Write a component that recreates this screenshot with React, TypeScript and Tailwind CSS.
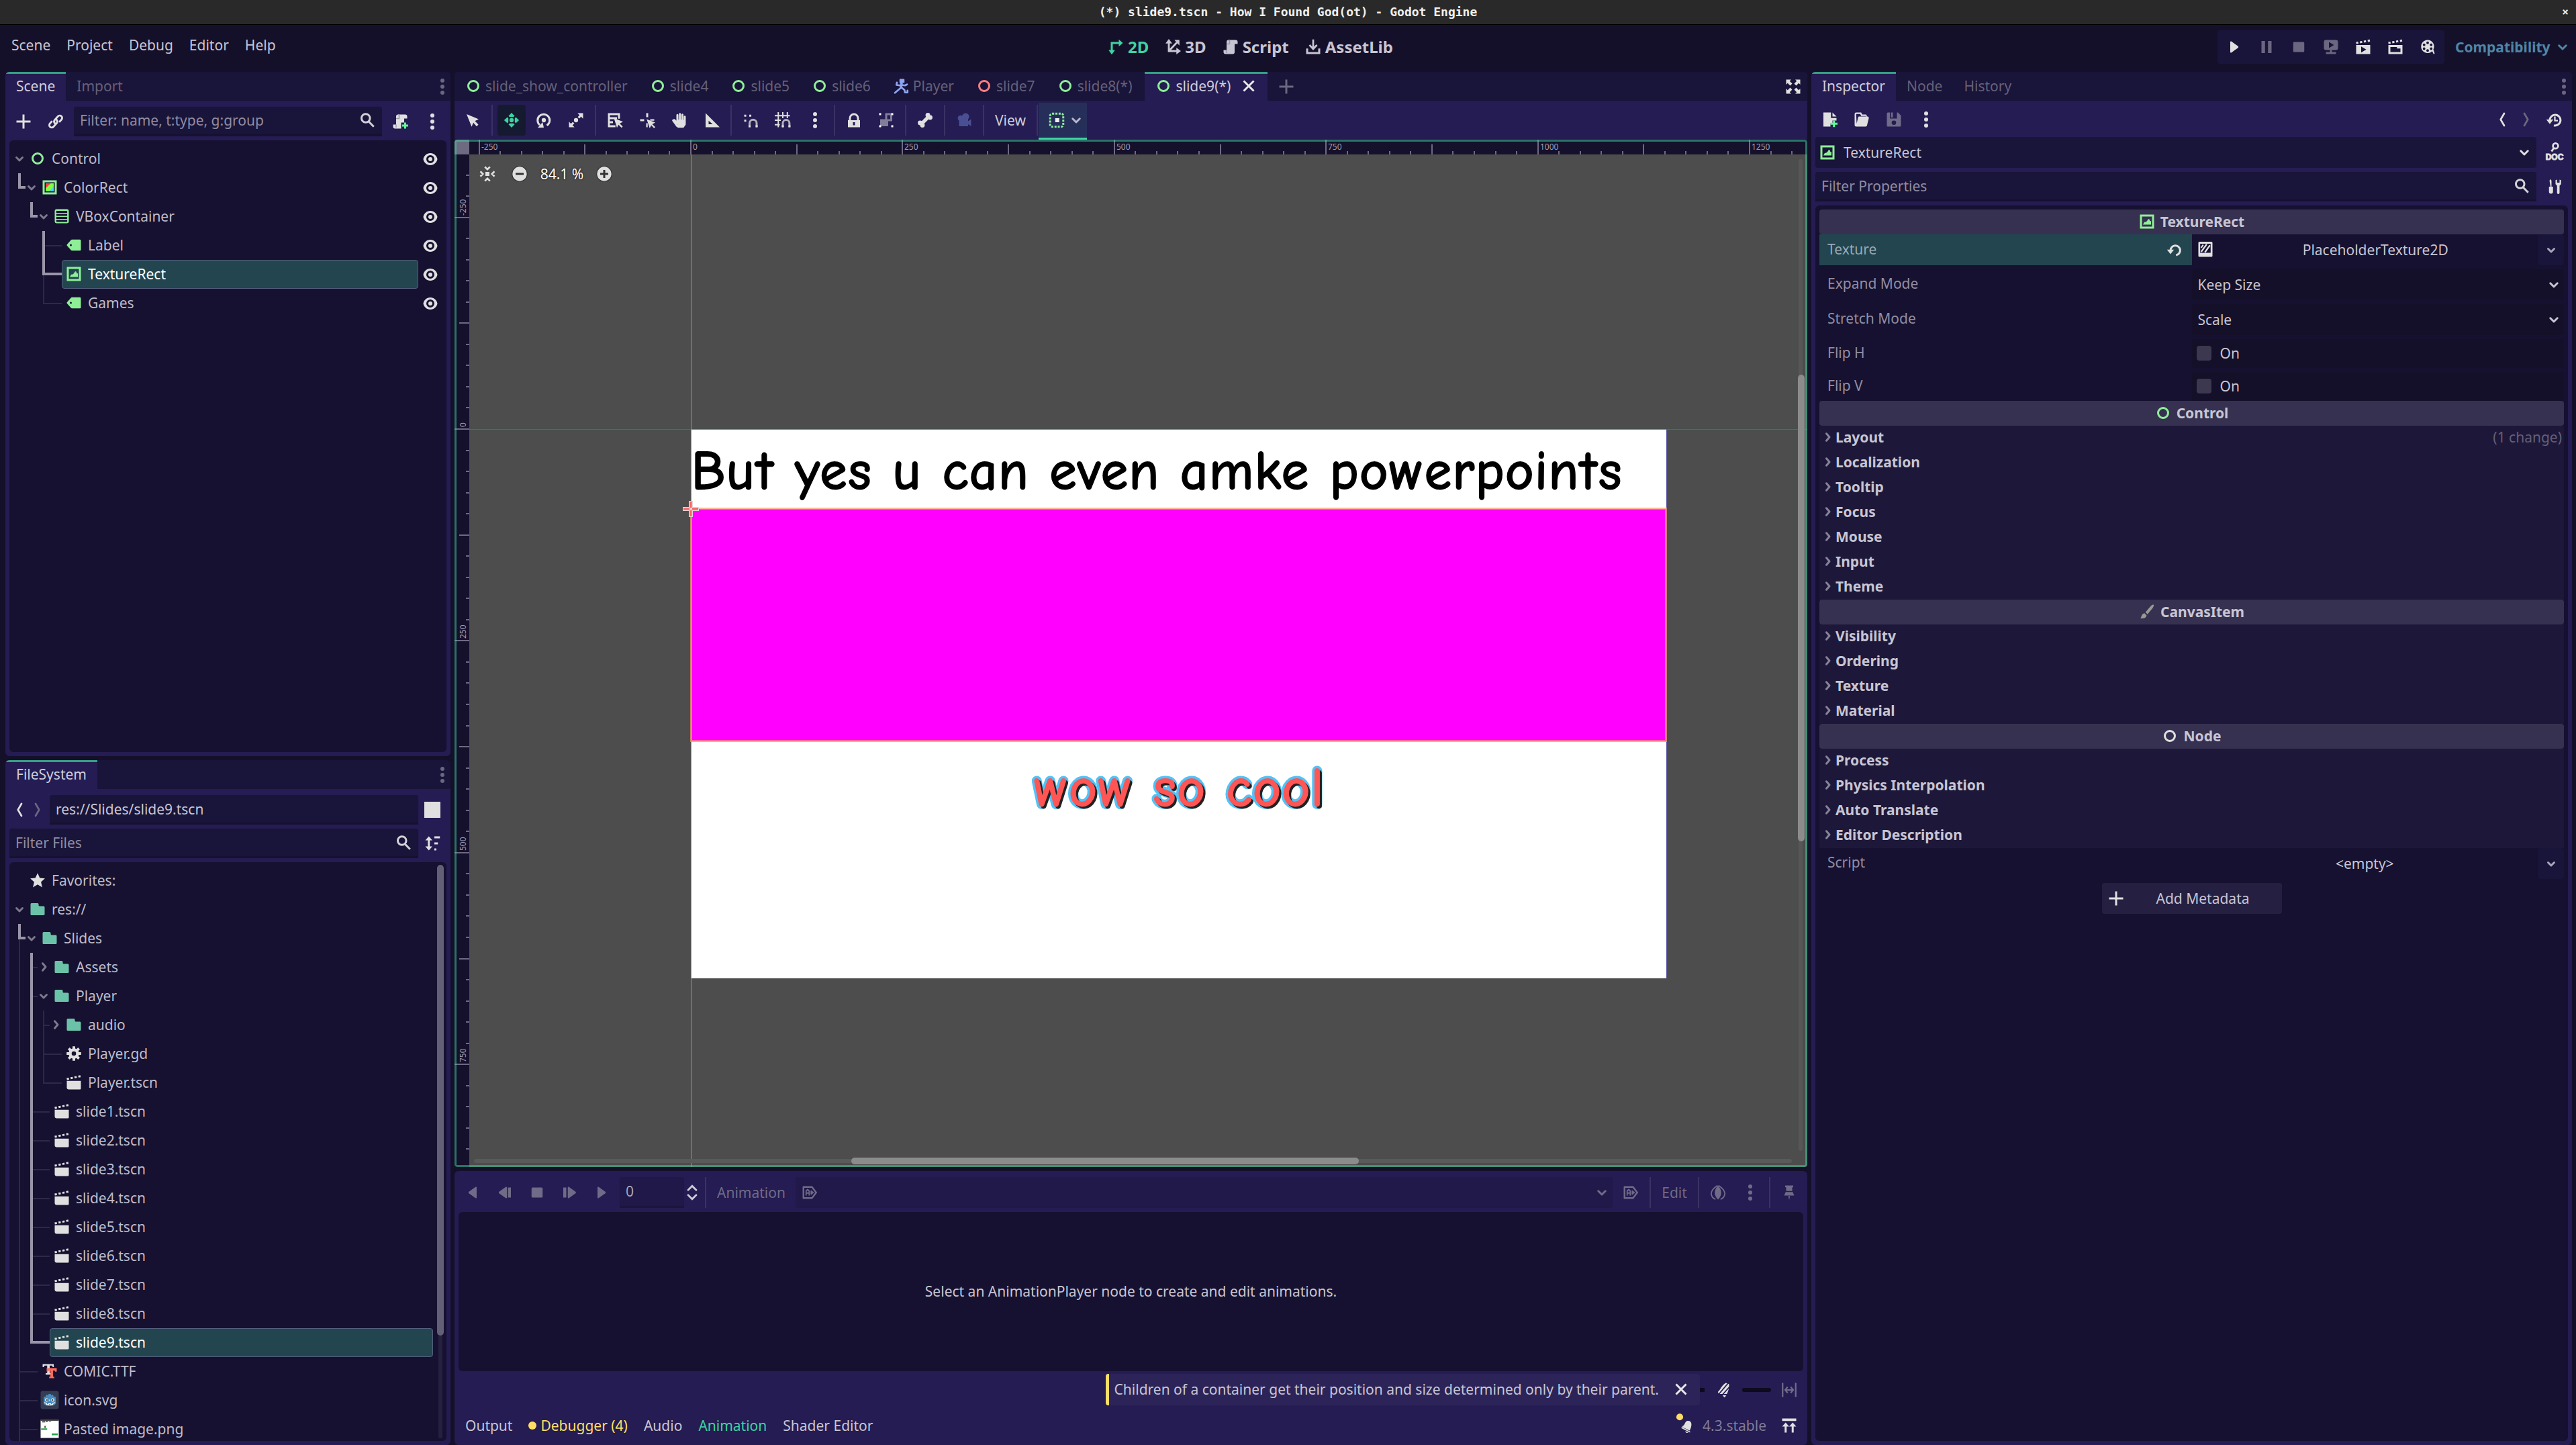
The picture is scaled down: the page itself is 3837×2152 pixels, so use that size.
import React from "react";

const G = "#8eef97";
const W = "#e0e0e0";

/* ------------------------------------------------------------------ icons */

const icons: Record<string, React.ReactNode> = {
  add: <path fill="currentColor" d="M7 1v6H1v2h6v6h2V9h6V7H9V1z" />,
  link: (
    <g fill="none" stroke="currentColor" strokeWidth="1.9" strokeLinecap="round">
      <path d="M7.2 9.8a2.6 2.6 0 0 1-.2-3.4l3.2-3.6a2.4 2.4 0 0 1 3.5 3.3L12 8" />
      <path d="M8.8 6.2a2.6 2.6 0 0 1 .2 3.4l-3.2 3.6a2.4 2.4 0 0 1-3.5-3.3L4 8" />
    </g>
  ),
  search: (
    <g fill="none" stroke="currentColor" strokeWidth="2">
      <circle cx="6.5" cy="6" r="4.2" />
      <path d="M9.5 9.3l5 5.2" />
    </g>
  ),
  script: (
    <g>
      <path fill="currentColor" d="M6 1a2 2 0 0 0-2 2v8H1v2a2 2 0 0 0 2 2h7a2 2 0 0 0 2-2V5h3V3a2 2 0 0 0-2-2z" />
      <path fill="none" stroke="#9a98a8" strokeWidth="1" d="M6 1a1.6 1.6 0 0 1 1 2v2H4M4 11v3" />
    </g>
  ),
  scriptAdd: (
    <g>
      <path fill="currentColor" d="M6 1a2 2 0 0 0-2 2v8H1v2a2 2 0 0 0 2 2h6V9h3V5h3V3a2 2 0 0 0-2-2z" />
      <path fill="none" stroke="#9a98a8" strokeWidth="1" d="M6 1a1.6 1.6 0 0 1 1 2v2H4M4 11v3" />
      <path fill="#5fff97" d="M12 9h2v2h2v2h-2v2h-2v-2h-2v-2h2z" />
    </g>
  ),
  dots: (
    <g fill="currentColor">
      <circle cx="8" cy="2" r="2" />
      <circle cx="8" cy="8" r="2" />
      <circle cx="8" cy="14" r="2" />
    </g>
  ),
  control: <circle cx="8" cy="8" r="5" fill="none" stroke={G} strokeWidth="2" />,
  controlRed: <circle cx="8" cy="8" r="5" fill="none" stroke="#fc7f7f" strokeWidth="2" />,
  node: <circle cx="8" cy="8" r="5" fill="none" stroke={W} strokeWidth="2" />,
  colorRect: (
    <g>
      <path fill={G} fillRule="evenodd" d="M1 1h14v14H1zM3 3v10h10V3z" />
      <path fill="#ff4545" d="M4 4h5l-5 6z" />
      <path fill="#80ff45" d="M9 4h3v4l-4 4H4v-3z" />
      <path fill="#45d7ff" d="M12 7v5H8z" />
    </g>
  ),
  vbox: <path fill={G} fillRule="evenodd" d="M3 1a2 2 0 0 0-2 2v10a2 2 0 0 0 2 2h10a2 2 0 0 0 2-2V3a2 2 0 0 0-2-2zM2.6 2.6h10.8v2H2.6zM2.6 5.600h10.8v2H2.6zM2.6 8.600h10.8v2H2.6zM2.6 11.600h10.8v2H2.6z" />,
  label: <path fill={G} fillRule="evenodd" d="M6 2.5a1 1 0 0 0-.7.3l-4 4.5a1 1 0 0 0 0 1.4l4 4.5a1 1 0 0 0 .7.3h8a1 1 0 0 0 1-1v-9a1 1 0 0 0-1-1zM5 7a1 1 0 0 1 0 2 1 1 0 0 1 0-2z" />,
  textureRect: (
    <g fill={G}>
      <path fillRule="evenodd" d="M1 1h14v14H1zM3 3v10h10V3z" />
      <path d="M9.2 5.5 8 7.5 6.6 8.5H5.4L4 11h8V7.5h-1l-.8-2z" />
    </g>
  ),
  eye: <path fill="currentColor" fillRule="evenodd" d="M8 2C4.4 2 1.5 4.8 1 8c.5 3.2 3.4 6 7 6s6.5-2.8 7-6c-.5-3.2-3.400-6-7-6zm0 2a4 4 0 0 1 0 8 4 4 0 0 1 0-8zm0 2a2 2 0 0 0 0 4 2 2 0 0 0 0-4z" />,
  open: <path fill="none" stroke="currentColor" strokeWidth="2" strokeLinecap="round" strokeLinejoin="round" d="M5 7l3 3 3-3" />,
  closed: <path fill="none" stroke="currentColor" strokeWidth="2" strokeLinecap="round" strokeLinejoin="round" d="M7 4.5l3 3.5-3 3.5" />,
  chevron: <path fill="none" stroke="currentColor" strokeWidth="2" strokeLinecap="round" strokeLinejoin="round" d="M4.5 6.5 8 10l3.5-3.5" />,
  back: <path fill="none" stroke="currentColor" strokeWidth="1.8" strokeLinecap="round" strokeLinejoin="round" d="M10 2 6.5 8l3.5 6" />,
  forward: <path fill="none" stroke="currentColor" strokeWidth="1.8" strokeLinecap="round" strokeLinejoin="round" d="M6 2l3.5 6L6 14" />,
  sort: (
    <g fill="currentColor">
      <path d="M4.5 1 8 5H5.5v6H8l-3.5 4L1 11h2.500V5H1z" />
      <path d="M10 1h5.500v2H10zM10 7h3.500v2H10zM10 13h2v2h-2z" />
    </g>
  ),
  star: <path fill="currentColor" d="m8 .8 2.200 4.900 5.100.5-3.900 3.500 1.200 5.300L8 12.200 3.400 15l1.200-5.300L.7 6.200l5.100-.5z" />,
  folder: <path fill="#6cc2a8" d="M2 2a1 1 0 0 0-1 1v10a1 1 0 0 0 1 1h12a1 1 0 0 0 1-1V6a1 1 0 0 0-1-1h-4a1 1 0 0 1-1-1V3a1 1 0 0 0-1-1z" />,
  clapper: (
    <g>
      <path fill="currentColor" d="M1 6.500h14V14a1 1 0 0 1-1 1H3a2 2 0 0 1-2-2z" />
      <path fill="none" stroke="currentColor" strokeWidth="2" strokeDasharray="2.2 1.7" d="M1 4.700 15 1.700" />
    </g>
  ),
  gear: (
    <g fill="none" stroke="currentColor">
      <circle cx="8" cy="8" r="3.7" strokeWidth="3" />
      <path strokeWidth="2.6" d="M8 .8v3M8 12.200v3M.8 8h3M12.200 8h3M2.900 2.900 5 5M11 11l2.100 2.100M13.100 2.900 11 5M5 11l-2.100 2.100" />
    </g>
  ),
  font: (
    <g>
      <path fill={W} d="M1 1h11v3h-1l-.5-1.500H8V10h1.500v1.500H4V10h1.500V2.500H3L2 4H1z" />
      <path fill="#ff6b5e" d="M5 5h10v3.500h-1.500l-.5-1H11.300V13.500h1.200V15H7.500v-1.500h1.200V7.500H7l-.5 1H5z" />
    </g>
  ),
  godot: (
    <g>
      <rect x="-1" y="-1" width="18" height="18" rx="2" fill="#363d52" />
      <path fill="#478cbf" d="M2 5 4 4.500 5 2.500l1.200 1L7 2h2l.8 1.500 1.200-1 1 2L14 5v6c0 1.500-2.700 3-6 3s-6-1.500-6-3z" />
      <circle cx="5" cy="8" r="1.6" fill="#fff" />
      <circle cx="11" cy="8" r="1.6" fill="#fff" />
      <circle cx="5.2" cy="8" r=".9" fill="#414042" />
      <circle cx="10.8" cy="8" r=".9" fill="#414042" />
      <path stroke="#fff" strokeWidth=".8" fill="none" d="M8 7.500v1.500M2.500 10.500l2.500 1v1h2v-.8h2v.8h2v-1l2.500-1" />
    </g>
  ),
  image: (
    <g>
      <rect x="-1" y="-1" width="18" height="18" fill="#fff" />
      <path fill="#111" d="M-1-1h18v.8H-1zM.5.5h3v1h-3zM4 .5h2v.8H4zM7 .5h2.500v.5H7z" />
      <path fill="#27a44a" d="M-.5 7.500H5.500V9H-.5zM10 12.500h6v1.800h-6z" />
      <path fill="#5a4a3a" d="M2.800 5h1.200v2.200H2.800z" />
    </g>
  ),
  player: (
    <g fill="none" stroke="#8da5f3" strokeLinecap="round" strokeLinejoin="round">
      <rect x="6.5" y="1" width="5" height="4" rx=".8" fill="#8da5f3" stroke="none" />
      <path strokeWidth="2.6" d="M8.500 5.500 8 9.500" />
      <path strokeWidth="1.8" d="M4 4.500 3.500 7 7 7.500M8.500 7l3.500.5L14 6.500M8 9.800l-2.500 2-3.500 3M8.500 9.500l3 2.500.5 2.500h2.500v-2" />
    </g>
  ),
  close: <path fill="none" stroke="currentColor" strokeWidth="2" d="m3 3 10 10M13 3 3 13" />,
  expand: <path fill="currentColor" d="M1 1h5L4.500 2.500 7 5 5 7 2.500 4.500 1 6zM15 1v5l-1.500-1.500L11 7 9 5l2.500-2.500L10 1zM1 15v-5l1.500 1.500L5 9l2 2-2.500 2.500L6 15zM15 15h-5l1.500-1.500L9 11l2-2 2.500 2.500L15 10z" />,
  select: <path fill="currentColor" d="M2 2l5 12.500 1.700-4 3.300 3.600 1.700-1.700-3.400-3.500L14 7z" />,
  move: (
    <g fill="currentColor">
      <circle cx="8" cy="8" r="2.1" />
      <path d="M8 .6 11 3.800 9.800 4.800H6.200L5 3.800zM8 15.400l3-3.200-1.200-1H6.200l-1.200 1zM.6 8l3.200-3 1 1.200v3.600l-1 1.200zM15.400 8l-3.200-3-1 1.200v3.600l1 1.200z" />
    </g>
  ),
  rotate: (
    <g>
      <circle cx="8" cy="8" r="2.1" fill="currentColor" />
      <path fill="none" stroke="currentColor" strokeWidth="2" d="M11 13.200A6 6 0 1 0 4 12.700" />
      <path fill="currentColor" d="M2 15.500 8 15.400 6.800 10z" />
    </g>
  ),
  scale: (
    <g fill="currentColor">
      <circle cx="8" cy="8" r="2.1" />
      <path d="M9.500 1H15v5.500l-2-2-1.800 1.800-1.500-1.500L11.500 3zM6.500 15H1V9.500l2 2 1.800-1.800 1.500 1.500L4.500 13z" />
    </g>
  ),
  listSelect: (
    <g>
      <path fill="none" stroke="currentColor" strokeWidth="1.9" d="M8.500 14H2V2h10v4.500M2 6h8M2 10h4" />
      <path fill="currentColor" d="M7 6l3 9.500 1.500-3 3 3 1.200-1.200-3-3L16 9.500z" />
    </g>
  ),
  pivot: (
    <g fill="currentColor">
      <path d="M7 1h2v4H7zM1 7h4v2H1zM11 7h4v1.500h-4zM7 11h1.500v4H7z" />
      <path d="M7.500 7l3 9 1.500-3 2.800 3 1.200-1.200-3-2.800 3-1.700z" />
    </g>
  ),
  hand: (
    <path
      fill="none"
      stroke="currentColor"
      strokeWidth="2"
      strokeLinecap="round"
      strokeLinejoin="round"
      d="M6 8V2.800M8.500 8V1.800M11 8V2.500M13.300 8V4.500M6 7v4L3 7.800l-1.200.5L5.500 13.500 7 14.500h4.500l1.800-2.500V8M7 8.500h5v4.500H7zM8 10h3v2H8"
    />
  ),
  ruler: <path fill="currentColor" fillRule="evenodd" d="M2 1v14h14zM5 8.500 9 12H5z" />,
  smartSnap: (
    <g>
      <path fill="currentColor" d="M2 2h2v2H2zM7 2h2v2H7zM2 7h2v2H2z" transform="translate(-.3 .5)" />
      <path fill="none" stroke="currentColor" strokeWidth="2" opacity=".75" d="M7 15v-4a3.500 3.500 0 0 1 7 0v4" />
      <path fill="currentColor" d="M6 13h2v2H6zM13 13h2v2h-2z" />
    </g>
  ),
  gridSnap: (
    <g>
      <path fill="none" stroke="currentColor" strokeWidth="1.3" d="M3.500 0v15M0 3.500h15M8 0v6M0 8h6M12.500 0v6M0 12.500h5" />
      <path fill="none" stroke="currentColor" strokeWidth="2" opacity=".75" d="M8 15v-4a3.300 3.300 0 0 1 6.600 0v4" />
      <path fill="currentColor" d="M7 13h2v2H7zM13.600 13h2v2h-2z" />
    </g>
  ),
  lock: <path fill="currentColor" fillRule="evenodd" d="M8 1a5 5 0 0 0-5 5v2H2v7h12V8h-1V6a5 5 0 0 0-5-5zm0 2a3 3 0 0 1 3 3v2H5V6a3 3 0 0 1 3-3zM7 10h2v3H7z" />,
  group: (
    <g>
      <path fill="currentColor" opacity=".5" fillRule="evenodd" d="M7 1h7v8h-4v5H2V7h5zM9 3v4h3V3z" />
      <path fill="#fff" d="M1 1h2v2H1zM13 1h2v2h-2zM1 13h2v2H1zM13 13h2v2h-2z" />
    </g>
  ),
  bone: (
    <g fill="currentColor">
      <circle cx="10.7" cy="3" r="2.3" />
      <circle cx="13" cy="5.3" r="2.3" />
      <circle cx="3" cy="10.7" r="2.3" />
      <circle cx="5.3" cy="13" r="2.3" />
      <path d="M9.500 4 12 6.500 6.500 12 4 9.500z" />
    </g>
  ),
  camera: (
    <g fill="#4a4f94">
      <circle cx="9.5" cy="4.5" r="3.5" />
      <circle cx="4.5" cy="6" r="2.8" />
      <path d="M3 6h9v3l3-2v7l-3-2v2H4a1 1 0 0 1-1-1z" />
    </g>
  ),
  anchors: (
    <g>
      <rect x="1.5" y="1.5" width="13" height="13" rx="2" fill="none" stroke={G} strokeWidth="2" strokeDasharray="2 1.2" />
      <path fill="#eee" d="M6.500 6h4v4h-4z" />
    </g>
  ),
  center: (
    <g fill="none" stroke="currentColor" strokeWidth="1.7">
      <path fill="currentColor" stroke="none" d="M6 6h4v4H6z" />
      <path d="M5.500 1 8 3.500 10.500 1M5.500 15 8 12.500l2.500 2.500M1 5.500 3.500 8 1 10.500M15 5.500 12.500 8l2.500 2.500" />
    </g>
  ),
  minus: (
    <g>
      <circle cx="8" cy="8" r="7.5" fill={W} stroke="#333" strokeWidth=".8" />
      <path fill="#333" d="M4 7h8v2H4z" />
    </g>
  ),
  plus: (
    <g>
      <circle cx="8" cy="8" r="7.5" fill={W} stroke="#333" strokeWidth=".8" />
      <path fill="#333" d="M4 7h3V4h2v3h3v2H9v3H7V9H4z" />
    </g>
  ),
  ws2d: <path fill="currentColor" d="M3 3h8V.5L15 4l-4 3.500V5H5v6h2.200L4 15.500.8 11H3z" />,
  ws3d: (
    <g fill="none" stroke="currentColor" strokeWidth="1.9">
      <path d="M4 2v10h9M4 12l8-8.500" />
      <path fill="currentColor" stroke="none" d="M4 0l3.300 4.500H.7zM16 12l-4.500 3.300V8.700zM14.500 1v5.500L9.500 1z" />
    </g>
  ),
  assetLib: (
    <g fill="none" stroke="currentColor" strokeWidth="2">
      <path d="M2 9.500v4.500h12V9.500" />
      <path strokeWidth="1.8" d="M8 .5v9M4.300 6 8 10l3.700-4" />
    </g>
  ),
  play: <path fill="currentColor" d="M4 3.200v9.600c0 .8.700 1 1.200.7l6.500-4.700c.5-.4.500-1.200 0-1.600L5.200 2.500C4.700 2.200 4 2.400 4 3.200z" />,
  playBack: <path fill="currentColor" d="M12 3.200v9.600c0 .8-.7 1-1.200.7L4.300 8.800c-.5-.4-.5-1.200 0-1.600l6.500-4.700c.5-.3 1.200-.1 1.200.7z" />,
  stepBack: <path fill="currentColor" d="M10 3.200v9.600c0 .8-.7 1-1.200.7L2.300 8.800c-.5-.4-.5-1.200 0-1.600l6.500-4.700c.5-.3 1.200-.1 1.200.7zM11 3h3v10h-3z" />,
  step: <path fill="currentColor" d="M6.500 3.200v9.600c0 .8.700 1 1.200.7l6.500-4.700c.5-.4.500-1.200 0-1.600L7.700 2.500c-.5-.3-1.200-.1-1.200.7zM2 3h3v10H2z" />,
  pause: <path fill="currentColor" d="M3 2h3.500v12H3zM9.500 2H13v12H9.500z" />,
  stop: <rect x="2.5" y="3" width="11" height="10" rx="1" fill="currentColor" />,
  remote: (
    <g fill="currentColor">
      <path fillRule="evenodd" d="M3 1h10a2 2 0 0 1 2 2v6a2 2 0 0 1-2 2H3a2 2 0 0 1-2-2V3a2 2 0 0 1 2-2zM6 3v6l5-3z" />
      <path d="M7 11h2v2h4v2H3v-2h4z" />
    </g>
  ),
  clapPlay: (
    <g>
      <path fill="currentColor" fillRule="evenodd" d="M1 6h14v9H1zM6 7.500v6l5-3z" />
      <path fill="none" stroke="currentColor" strokeWidth="2" strokeDasharray="2.2 1.7" d="M1 4 15 1.500" />
    </g>
  ),
  clapFile: (
    <g>
      <path fill="currentColor" fillRule="evenodd" d="M1 6h14v9H1zM3 8v5h10V9.500H9.500V8z" />
      <path fill="none" stroke="currentColor" strokeWidth="2" strokeDasharray="2.2 1.7" d="M1 4 15 1.500" />
    </g>
  ),
  reel: (
    <path
      fill="currentColor"
      fillRule="evenodd"
      d="M8 1a6.500 6.500 0 1 0 4.500 11.200l1.500 3 1-.7-1.300-4A6.500 6.500 0 0 0 8 1zm0 1.500a1.300 1.300 0 1 1 0 2.600 1.300 1.300 0 0 1 0-2.600zM4.500 4.500a1.300 1.300 0 1 1 0 2.600 1.300 1.300 0 0 1 0-2.600zm7 0a1.300 1.300 0 1 1 0 2.600 1.300 1.300 0 0 1 0-2.600zM4.500 8.400a1.300 1.300 0 1 1 0 2.600 1.300 1.300 0 0 1 0-2.600zm7 0a1.300 1.300 0 1 1 0 2.600 1.300 1.300 0 0 1 0-2.600zM8 10.200a1.300 1.300 0 1 1 0 2.600 1.300 1.300 0 0 1 0-2.600z"
    />
  ),
  fileNew: (
    <g>
      <path fill="currentColor" d="M2 1v14h7v-3h2V9h4V6.500H9.500V1zM11 1v4h4z" />
      <path fill="#5fff97" d="M11.500 9h2v2.200H16v2h-2.500v2.300h-2v-2.300H9v-2h2.500z" />
    </g>
  ),
  load: <path fill="currentColor" fillRule="evenodd" d="M2.500 1A1.500 1.500 0 0 0 1 2.500v11A1.500 1.500 0 0 0 2.500 15H12a1.500 1.500 0 0 0 1.300-1.200L15 7V6a1 1 0 0 0-1-1h-1V4a1 1 0 0 0-1-1H8.500l-1-2zM2.500 2.500h4l1 2H12V5H5.500a1 1 0 0 0-1 .8L3 12z" />,
  save: <path fill="currentColor" fillRule="evenodd" d="M2 1a1 1 0 0 0-1 1v12a1 1 0 0 0 1 1h12a1 1 0 0 0 1-1V4l-3-3h-1v6H4V1zm3 0v5h2V1zM8 9a2.200 2.200 0 1 1 0 4.400A2.200 2.200 0 0 1 8 9z" />,
  history: (
    <g fill="none" stroke="currentColor" strokeWidth="2">
      <path d="M4 9A5.300 5.300 0 1 1 8 13.800" />
      <path strokeWidth="1.5" d="M9 5v4h3" />
      <path fill="currentColor" stroke="none" d="M.5 8h7L4 12.500z" />
    </g>
  ),
  doc: (
    <g>
      <circle cx="9" cy="1.5" r="2.6" fill="none" stroke="currentColor" strokeWidth="1.8" />
      <path stroke="currentColor" strokeWidth="2" d="M7.500 3.500 5 7" />
      <text x="8" y="15.5" textAnchor="middle" fill="currentColor" stroke="currentColor" strokeWidth=".7" fontSize="8" fontWeight="700" fontFamily="Liberation Sans, sans-serif">DOC</text>
    </g>
  ),
  tools: (
    <g fill="currentColor">
      <path d="M4 .5 5 2v6h1.500v5a2 2 0 0 1-4 0V8H4l-1-6z" />
      <path d="M9 1.500v4L10.500 7v7a1 1 0 0 0 2.500 0V7l1.500-1.500v-4L13 1v3h-2.500V1z" />
    </g>
  ),
  reload: (
    <g>
      <path fill="none" stroke="currentColor" strokeWidth="2" d="M4 9.500A4.800 4.800 0 1 1 9.500 14" />
      <path fill="currentColor" d="M.5 8.500h7L4 13z" />
    </g>
  ),
  placeholderTex: (
    <g>
      <path fill="currentColor" fillRule="evenodd" d="M2 0a1 1 0 0 0-1 1v13a1 1 0 0 0 1 1h12a1 1 0 0 0 1-1V1a1 1 0 0 0-1-1zM2.800 2v9h10.400V2z" />
      <path fill="none" stroke="currentColor" strokeWidth="1.5" d="m3.800 10 5.500-7.500M7.500 10.500l5-7M3.800 6l2-3" />
    </g>
  ),
  brush: (
    <g fill="#9a9a94">
      <path d="M14.500 1c-1-.3-2 .5-3 1.700L6.500 8.500l2 2 5-6c1-1.500 1.600-3 1-3.500z" />
      <path d="M5.500 9.500 7.500 11.500C7.500 14 5 15 1.500 14.500 2.500 13.500 2.500 10 5.500 9.500z" />
    </g>
  ),
  spin: <path fill="none" stroke="currentColor" strokeWidth="1.8" strokeLinecap="round" d="M4 5.500 8 1.500l4 4M4 10.500l4 4 4-4" />,
  autoplay: (
    <g fill="none" stroke="currentColor" strokeWidth="1.6" strokeLinejoin="round">
      <path d="M1.800 2.500h8.500L14.500 8l-4.200 5.500H1.800z" />
      <path strokeWidth="1.2" d="M4.500 11V6.500L6 5l1.500 1.500V11M4.500 8.500h3M9.500 6.500v3l2-1.500z" />
    </g>
  ),
  onion: (
    <g>
      <path fill="currentColor" d="M8 1c4 4.500 4.500 9.500 0 14C3.500 10.500 4 5.500 8 1z" />
      <path fill="none" stroke="currentColor" strokeWidth="1.3" d="M7.500 1C3 4 1 6.500 1.300 9.500c.3 2.500 1.700 4.300 4.200 5.200M8.500 1C13 4 15 6.500 14.700 9.500c-.3 2.500-1.700 4.300-4.200 5.200" />
    </g>
  ),
  pin: <path fill="currentColor" d="M4 1h8v1.500L11 3v3.500H5V3l-1-.5zM4.500 7.500h7L13 11H3zM7.200 11.500h1.600L8 15.500z" />,
  snapBell: (
    <g>
      <path fill="currentColor" d="M10.500 1 13.500 2c.7 3-.5 7-2 10H3.500l-1-2C5 8 6 3.500 10.500 1zM7 13l4 .5L9 15.500z" />
      <path stroke="#241c52" strokeWidth="1.2" d="M1.500 14.500 13 1M5 15 15 4" />
    </g>
  ),
  fit: <path fill="none" stroke="currentColor" strokeWidth="1.5" d="M1.500 1v14M14.500 1v14M4 8h8M6.500 5 4 8l2.500 3M9.500 5 12 8l-2.500 3" />,
  bell: (
    <g>
      <path fill="currentColor" d="M9 3.500c2.500-.8 4.500.5 4.600 3 .1 2.500-.7 4.300-1.700 6.500L4.500 9.500l.3-1C7 8 7 4.500 9 3.500zM4 9.500l8.500 4.500-.3 1L3.500 10.500zM7.500 13.500l3 1.400c-1 1.100-2.800.3-3-1.400z" />
      <circle cx="2" cy="-.5" r="3.4" fill="#ffdd65" />
    </g>
  ),
  raise: <path fill="currentColor" d="M1 1h14v2.500H1zM4.500 5 8 9H5.500v6h-2V9H1zM11.500 5 15 9h-2.500v6h-2V9H8z" />,
};

function Icon({ name, className = "" }: { name: string; className?: string }) {
  return (
    <svg aria-hidden="true" viewBox="0 0 16 16" className={`size-6 shrink-0 overflow-visible ${className}`}>
      {icons[name]}
    </svg>
  );
}

/* --------------------------------------------------------------- controls */

function Tool({ icon, label, className = "text-[#e0e0e0]" }: { icon: string; label: string; className?: string }) {
  return (
    <button aria-label={label} className={`flex h-[46px] w-[42px] shrink-0 items-center justify-center rounded ${className}`}>
      <Icon name={icon} />
    </button>
  );
}

const Sep = () => <span className="flex h-[46px] w-1 shrink-0 justify-center"><span className="w-0.5 bg-[#3a3264]" /></span>;

function Field({ label, placeholder, value, icon }: { label: string; placeholder?: string; value?: string; icon?: boolean }) {
  return (
    <label className="flex h-11 min-w-0 flex-1 items-center rounded-t border-b-[3px] border-[#16112e] bg-[#191439] pr-2.5">
      <input aria-label={label} placeholder={placeholder} defaultValue={value} className="h-full min-w-0 flex-1 bg-transparent pl-[9px] text-[#c8c5d3] outline-none placeholder:text-[#908ca2]" />
      {icon && <Icon name="search" className="text-[#d2d1d8]" />}
    </label>
  );
}

function DockTabs({ tabs }: { tabs: string[] }) {
  return (
    <div role="tablist" className="flex h-[43px] shrink-0 items-stretch rounded-t bg-[#191439]">
      {tabs.map((t, i) => (
        <button
          key={t}
          role="tab"
          aria-selected={i === 0}
          className={
            i === 0
              ? "border-t-[3px] border-[#37a085] bg-[#241c52] px-4 pb-1 text-[#d0cdda]"
              : "border-t-[3px] border-transparent px-4 pb-1 text-[#656179]"
          }
        >
          {t}
        </button>
      ))}
      <button aria-label="Dock options" className="ml-auto flex w-6 items-center justify-center text-[#6b6780]">
        <Icon name="dots" />
      </button>
    </div>
  );
}

/* ------------------------------------------------------------------ trees */

type Row = {
  text: string;
  icon: string;
  depth: number;
  guides?: string;
  arrow?: "open" | "closed";
  selected?: boolean;
};

const THICK = "#9a95a8";
const THIN = "#2e2947";

/* Guide codes, one per ancestor level: L/l thick or thin corner, T/t thick or
   thin line, E thin branch, B thin branch on a thick line, M thick corner
   whose line goes on thin. */
function Guides({ row }: { row: Row }) {
  const codes = row.guides ?? "";
  const width = 18 * (row.depth + 1);
  return (
    <svg aria-hidden="true" width={width} height="43" className="shrink-0">
      {codes.split("").map((c, k) => {
        const x = 18 * k + 9;
        const end = row.arrow ? 18 * k + 18 : 18 * k + 36;
        return (
          <g key={k}>
            {"tE".includes(c) && <path d={`M${x} 0v43`} stroke={THIN} strokeWidth="2" />}
            {c === "M" && <path d={`M${x} 22v21`} stroke={THIN} strokeWidth="2" />}
            {"EB".includes(c) && <path d={`M${x} 22H${end}`} stroke={THIN} strokeWidth="2" />}
            {c === "l" && <path d={`M${x} 0v22H${end}`} fill="none" stroke={THIN} strokeWidth="2" />}
            {"TB".includes(c) && <path d={`M${x} 0v43`} stroke={THICK} strokeWidth="4" />}
            {"LM".includes(c) && <path d={`M${x} 0v21H${end}`} fill="none" stroke={THICK} strokeWidth="4" />}
          </g>
        );
      })}
      {row.arrow && (
        <svg x={width - 21} y="9" width="24" height="24" viewBox="0 0 16 16" className="text-[#7c788e]">
          {icons[row.arrow]}
        </svg>
      )}
    </svg>
  );
}

function TreeRow({ row, eye }: { row: Row; eye?: boolean }) {
  return (
    <li className="flex h-[43px] items-center pl-1.5">
      <Guides row={row} />
      <button
        className={`flex h-[43px] min-w-0 flex-1 items-center gap-[9px] border pb-px pl-[5px] text-left ${
          row.selected ? "rounded border-[#56607f] bg-[#22454f] text-white" : "border-transparent text-[#bfbccb]"
        }`}
      >
        <Icon name={row.icon} className="text-[#e0e0e0]" />
        <span className="truncate">{row.text}</span>
      </button>
      {eye && (
        <button aria-label={`Toggle visibility of ${row.text}`} className="mr-3 ml-1.5 text-[#e0e0e0]">
          <Icon name="eye" />
        </button>
      )}
    </li>
  );
}

const sceneRows: Row[] = [
  { text: "Control", icon: "control", depth: 0, arrow: "open" },
  { text: "ColorRect", icon: "colorRect", depth: 1, guides: "L", arrow: "open" },
  { text: "VBoxContainer", icon: "vbox", depth: 2, guides: ".L", arrow: "open" },
  { text: "Label", icon: "label", depth: 3, guides: "..B" },
  { text: "TextureRect", icon: "textureRect", depth: 3, guides: "..M", selected: true },
  { text: "Games", icon: "label", depth: 3, guides: "..l" },
];

const fileRows: Row[] = [
  { text: "Favorites:", icon: "star", depth: 0 },
  { text: "res://", icon: "folder", depth: 0, arrow: "open" },
  { text: "Slides", icon: "folder", depth: 1, guides: "M", arrow: "open" },
  { text: "Assets", icon: "folder", depth: 2, guides: "tB", arrow: "closed" },
  { text: "Player", icon: "folder", depth: 2, guides: "tB", arrow: "open" },
  { text: "audio", icon: "folder", depth: 3, guides: "tTE", arrow: "closed" },
  { text: "Player.gd", icon: "gear", depth: 3, guides: "tTE" },
  { text: "Player.tscn", icon: "clapper", depth: 3, guides: "tTl" },
  ...[1, 2, 3, 4, 5, 6, 7, 8].map((n) => ({ text: `slide${n}.tscn`, icon: "clapper", depth: 2, guides: "tB" })),
  { text: "slide9.tscn", icon: "clapper", depth: 2, guides: "tL", selected: true },
  { text: "COMIC.TTF", icon: "font", depth: 1, guides: "E" },
  { text: "icon.svg", icon: "godot", depth: 1, guides: "E" },
  { text: "Pasted image.png", icon: "image", depth: 1, guides: "E" },
];

/* ------------------------------------------------------------- main pieces */

function TitleBar() {
  return (
    <header className="flex h-[37px] shrink-0 items-center border-b border-black bg-[#292929] px-2 font-['DejaVu_Sans_Mono',monospace] text-[18px] font-bold text-[#f0f0f0]">
      <span className="w-4" />
      <h1 className="flex-1 text-center">(*) slide9.tscn - How I Found God(ot) - Godot Engine</h1>
      <button aria-label="Close window" className="w-4 text-[16px]">×</button>
    </header>
  );
}

const workspaces = [
  ["ws2d", "2D"],
  ["ws3d", "3D"],
  ["script", "Script"],
  ["assetLib", "AssetLib"],
];

function MenuBar() {
  const run: [string, string, boolean][] = [
    ["play", "Run project", true],
    ["pause", "Pause", false],
    ["stop", "Stop", false],
    ["remote", "Remote debug", false],
    ["clapPlay", "Run current scene", true],
    ["clapFile", "Run specific scene", true],
    ["reel", "Movie maker", true],
  ];
  return (
    <div className="grid h-[70px] shrink-0 grid-cols-[1fr_auto_1fr] items-center pb-1">
      <nav className="flex gap-6 pb-1.5 pl-[17px] text-[#c8c5d3]">
        {["Scene", "Project", "Debug", "Editor", "Help"].map((m) => (
          <button key={m}>{m}</button>
        ))}
      </nav>
      <nav className="mr-28 flex gap-6 text-[24px] font-bold">
        {workspaces.map(([icon, t], i) => (
          <button key={t} className={`flex items-center gap-1.5 ${i === 0 ? "text-[#3fd3a1]" : "text-[#c8c5d3]"}`}>
            <Icon name={icon} />
            {t}
          </button>
        ))}
      </nav>
      <div className="flex items-center justify-end">
        <div className="flex h-[50px] items-center gap-1.5 rounded bg-[#191439] px-1">
          {run.map(([icon, label, on]) => (
            <Tool key={icon} icon={icon} label={label} className={on ? "text-[#e0e0e0]" : "text-[#6b6780]"} />
          ))}
        </div>
        <label className="ml-4 flex items-center pr-2 font-bold text-[#4f86a6]">
          <select aria-label="Rendering method" className="appearance-none bg-transparent outline-none">
            <option>Compatibility</option>
          </select>
          <Icon name="chevron" className="ml-1.5" />
        </label>
      </div>
    </div>
  );
}

function LeftColumn() {
  return (
    <aside className="flex w-[663px] shrink-0 flex-col gap-1.5">
      <section className="flex h-[1019px] shrink-0 flex-col overflow-hidden rounded-md bg-[#241c52]">
        <DockTabs tabs={["Scene", "Import"]} />
        <div className="flex h-[59px] shrink-0 items-center gap-1.5 px-1.5 pt-0.5">
          <Tool icon="add" label="Add node" />
          <Tool icon="link" label="Instantiate scene" />
          <Field label="Filter nodes" placeholder="Filter: name, t:type, g:group" icon />
          <Tool icon="scriptAdd" label="Attach script" />
          <Tool icon="dots" label="Scene options" />
        </div>
        <ul className="mx-1.5 mb-1.5 flex-1 rounded-md bg-[#161130] pt-1.5">
          {sceneRows.map((r) => (
            <TreeRow key={r.text} row={r} eye />
          ))}
        </ul>
      </section>
      <section className="flex min-h-0 flex-1 flex-col overflow-hidden rounded-md bg-[#241c52]">
        <DockTabs tabs={["FileSystem"]} />
        <div className="mt-[9px] flex shrink-0 items-center gap-1.5 px-1.5">
          <button aria-label="Back" className="flex w-6 justify-center pl-1.5 text-[#e0e0e0]"><Icon name="back" /></button>
          <button aria-label="Forward" className="flex w-6 justify-center text-[#6b6780]"><Icon name="forward" /></button>
          <Field label="Path" value="res://Slides/slide9.tscn" />
          <button aria-label="Toggle split mode" className="mr-[9px] ml-[3px] size-6 bg-[#e0e0e0]" />
        </div>
        <div className="mt-1.5 flex shrink-0 items-center gap-[9px] pr-[15px] pl-1.5">
          <Field label="Filter files" placeholder="Filter Files" icon />
          <button aria-label="Sort files" className="text-[#e0e0e0]"><Icon name="sort" /></button>
        </div>
        <div className="m-1.5 flex min-h-0 flex-1 overflow-hidden rounded-md bg-[#161130]">
          <ul className="flex-1 pt-1.5">
            {fileRows.map((r) => (
              <TreeRow key={r.text} row={r} />
            ))}
          </ul>
          <div className="my-1 mr-1 ml-1.5 w-2.5">
            <div className="mx-0.5 h-full rounded-full bg-[#252040]">
              <div className="-mx-0.5 h-[701px] rounded-full bg-[#635f77]" />
            </div>
          </div>
        </div>
      </section>
    </aside>
  );
}

const sceneTabs: [string, string][] = [
  ["control", "slide_show_controller"],
  ["control", "slide4"],
  ["control", "slide5"],
  ["control", "slide6"],
  ["player", "Player"],
  ["controlRed", "slide7"],
  ["control", "slide8(*)"],
];

function SceneTabs() {
  return (
    <div role="tablist" className="flex h-[43px] shrink-0 items-stretch rounded-t bg-[#191439]">
      {sceneTabs.map(([icon, t]) => (
        <button key={t} role="tab" className="flex items-center gap-1.5 pr-[17px] pb-px pl-4 text-[#656179]">
          <Icon name={icon} />
          {t}
        </button>
      ))}
      <div className="ml-0.5 flex items-center border-t-[3px] border-[#37a085] bg-[#241c52] px-4 pb-1">
        <button role="tab" aria-selected className="flex items-center gap-1.5 text-[#d0cdda]">
          <Icon name="control" />
          slide9(*)
        </button>
        <button aria-label="Close tab" className="ml-[15px] text-[#e8e8e8]"><Icon name="close" /></button>
      </div>
      <button aria-label="New scene" className="ml-4 flex items-center text-[#6b6780]"><Icon name="add" /></button>
      <button aria-label="Distraction free mode" className="mr-[9px] ml-auto flex items-center text-[#e0e0e0]"><Icon name="expand" /></button>
    </div>
  );
}

function CanvasToolbar() {
  return (
    <div className="flex h-[58px] shrink-0 items-center gap-1.5 bg-[#241c52] pl-1.5">
      <Tool icon="select" label="Select mode" />
      <Sep />
      <Tool icon="move" label="Move mode" className="bg-[#161a30] text-[#3fd3a1]" />
      <Tool icon="rotate" label="Rotate mode" />
      <Tool icon="scale" label="Scale mode" />
      <Sep />
      <Tool icon="listSelect" label="List selectable nodes" />
      <Tool icon="pivot" label="Change pivot" />
      <Tool icon="hand" label="Pan mode" />
      <Tool icon="ruler" label="Ruler mode" />
      <Sep />
      <Tool icon="smartSnap" label="Smart snap" />
      <Tool icon="gridSnap" label="Grid snap" />
      <Tool icon="dots" label="Snapping options" />
      <Sep />
      <Tool icon="lock" label="Lock" />
      <Tool icon="group" label="Group" />
      <Sep />
      <Tool icon="bone" label="Skeleton options" />
      <Sep />
      <Tool icon="camera" label="Override camera" />
      <Sep />
      <button className="w-16 text-[#d0cdda]">View</button>
      <div className="flex items-center self-stretch">
        <Sep />
        <button aria-label="Anchor presets" className="mt-[3px] flex h-[55px] w-[72px] items-center gap-[5px] border-b-[3px] border-[#3fd3a1] bg-[#262f5a] pl-[15px] text-[#b8b6c8]">
          <Icon name="anchors" />
          <Icon name="chevron" />
        </button>
      </div>
    </div>
  );
}

/* Ruler scale: screen pixels for 25 canvas units. */
const STEP = 31.54;

function Ruler({ origin, from, to, vertical }: { origin: number; from: number; to: number; vertical?: boolean }) {
  const marks = [];
  for (let i = from; i <= to; i++) marks.push(i);
  return (
    <svg className={vertical ? "h-full w-[22px]" : "h-[22px] w-full"}>
      {marks.map((i) => {
        const p = Math.round(origin + i * STEP);
        const len = i % 10 === 0 ? 22 : i % 5 === 0 ? 15 : 5;
        return (
          <g key={i}>
            <path d={vertical ? `M${22 - len} ${p}H22` : `M${p} ${22 - len}V22`} stroke="#6e6a82" strokeWidth="2" />
            {i % 10 === 0 &&
              (vertical ? (
                <text transform={`translate(17 ${p - 3}) rotate(-90)`} fill="#a19db0" fontSize="12">{i * 25}</text>
              ) : (
                <text x={p + 3} y="15" fill="#a19db0" fontSize="12">{i * 25}</text>
              ))}
          </g>
        );
      })}
    </svg>
  );
}

function Viewport() {
  return (
    <div className="relative grid min-h-0 flex-1 grid-cols-[22px_1fr] grid-rows-[22px_1fr] overflow-hidden rounded-sm bg-[#15102c]">
      <div className="bg-[#6e6a82]" />
      <Ruler origin={330} from={-10} to={52} />
      <Ruler origin={409} from={-12} to={34} vertical />
      <div className="relative overflow-hidden bg-[#4d4d4d]">
        <div className="absolute top-[409px] left-[330px] flex h-[818px] w-[1454px] flex-col border-r border-[#55529b] bg-white font-['Comic_Sans_MS','Comic_Neue','Noto_Sans',sans-serif] leading-none">
          <p className="flex h-[119px] items-center pt-1.5 text-[85px] font-bold whitespace-nowrap text-black">But yes u can even amke powerpoints</p>
          <div className="h-[346px] bg-[#ff00ff]" />
          <p className="pt-7 text-center text-[84px] leading-[84px] font-bold whitespace-nowrap text-[#ff5555] [-webkit-text-stroke:7px_#4fc3f7] [paint-order:stroke_fill] [text-shadow:3px_3px_0_#222]">
            wow so cool
          </p>
        </div>
        <div className="absolute top-[409px] left-0 h-px w-full bg-[#ca3a5a]/80" />
        <div className="absolute top-0 left-[330px] h-full w-px bg-[#7ab51d]" />
        <div className="absolute top-[526px] left-[329px] h-[349px] w-[1455px] border-[3px] border-[rgba(255,153,102,0.7)]" />
        <svg className="absolute top-[516px] left-[318px] size-6" viewBox="0 0 24 24" aria-hidden="true">
          <path d="M12 0v24M0 12h24" stroke="#d8d8d8" strokeWidth="6" />
          <path d="M12 1v9M12 14v9M1 12h9M14 12h9" stroke="#ff5f5f" strokeWidth="3" />
        </svg>
        <div className="absolute top-[11px] left-[15px] flex h-9 items-center gap-[18px] text-[#e0e0e0]">
          <button aria-label="Center view" className="mr-1.5"><Icon name="center" /></button>
          <button aria-label="Zoom out"><Icon name="minus" /></button>
          <button className="w-[66px] text-white [text-shadow:0_0_3px_#000]">84.1 %</button>
          <button aria-label="Zoom in"><Icon name="plus" /></button>
        </div>
        <div className="absolute right-[7px] bottom-6 h-[1477px] w-1.5 rounded bg-[#575757]" />
        <div className="absolute top-[328px] right-1 h-[695px] w-2.5 rounded-full bg-[#8c8c8c]" />
        <div className="absolute right-[23px] bottom-1.5 left-[7px] h-1.5 rounded bg-[#5a5a5a]" />
        <div className="absolute bottom-1 left-[569px] h-2.5 w-[756px] rounded-full bg-[#8c8c8c]" />
      </div>
      <div className="pointer-events-none absolute inset-0 rounded-sm border-[3px] border-[#3fd3a1]/50" />
    </div>
  );
}

function BottomPanel() {
  return (
    <section className="mt-1.5 flex h-[408px] shrink-0 flex-col rounded-md bg-[#241c52]">
      <div className="flex h-[61px] shrink-0 items-center gap-1.5 px-1.5 pt-0.5 text-[#6f6b88]">
        {["playBack", "stepBack", "stop", "step", "play"].map((n) => (
          <Tool key={n} icon={n} label={n} className="text-[#6f6b88]" />
        ))}
        <input aria-label="Time" defaultValue="0" className="h-[46px] w-24 rounded-t border-b-[3px] border-[#1a153c] bg-[#1f1848] pl-[9px] text-[#a9a6bb] outline-none" />
        <button aria-label="Adjust time" className="-ml-1.5 text-[#d0cdda]"><Icon name="spin" /></button>
        <Sep />
        <button className="mx-[9px] text-[#6f6b88]">Animation</button>
        <label className="flex h-[46px] min-w-0 flex-1 items-center rounded bg-[#201949] pr-1 pl-[9px]">
          <Icon name="autoplay" />
          <select aria-label="Current animation" className="h-full min-w-0 flex-1 appearance-none bg-transparent outline-none" />
          <Icon name="chevron" />
        </label>
        <Tool icon="autoplay" label="Autoplay on load" className="text-[#6f6b88]" />
        <Sep />
        <button className="w-14">Edit</button>
        <Sep />
        <Tool icon="onion" label="Onion skinning" className="text-[#6f6b88]" />
        <Tool icon="dots" label="Onion options" className="text-[#6f6b88]" />
        <Sep />
        <Tool icon="pin" label="Pin player" className="text-[#6f6b88]" />
      </div>
      <div className="mx-1.5 flex h-[237px] shrink-0 items-center justify-center rounded-md bg-[#161130] pb-0.5 text-[#c8c5d3]">
        Select an AnimationPlayer node to create and edit animations.
      </div>
      <div className="mt-1 flex shrink-0 items-center justify-end pr-[15px]">
        <div role="status" className="flex h-[47px] items-center rounded border-l-[5px] border-[#ffdd65] bg-[#2c2458] pr-4 pb-0.5 pl-2 text-[#c8c5d3]">
          Children of a container get their position and size determined only by their parent.
          <button aria-label="Dismiss" className="ml-[21px] text-[#e8e8e8]"><Icon name="close" /></button>
        </div>
        <span className="h-1.5 w-[7px] bg-[#0e0a1f]" />
        <button aria-label="Toggle bezier" className="ml-4 text-[#e0e0e0]"><Icon name="snapBell" /></button>
        <span className="ml-4 h-1.5 w-[43px] rounded-sm bg-[#0e0a1f]" />
        <button aria-label="Fit timeline" className="ml-[15px] text-[#6f6b88]"><Icon name="fit" /></button>
      </div>
      <div className="flex flex-1 items-center gap-6 pr-[15px] pl-4 text-[#c8c5d3]">
        <button>Output</button>
        <button className="flex items-center gap-1.5 text-[#ffdd65]">
          <span className="size-3 rounded-full bg-[#ffdd65]" />
          Debugger (4)
        </button>
        <button>Audio</button>
        <button className="text-[#3fd3a1]">Animation</button>
        <button>Shader Editor</button>
        <div className="ml-auto flex items-center">
          <button aria-label="Notifications" className="text-[#e0e0e0]"><Icon name="bell" /></button>
          <a href="#version" className="ml-[13px] text-[#7f7b98]">4.3.stable</a>
          <button aria-label="Expand bottom panel" className="ml-[22px] text-[#e0e0e0]"><Icon name="raise" /></button>
        </div>
      </div>
    </section>
  );
}

/* -------------------------------------------------------------- inspector */

function Category({ icon, title }: { icon: string; title: string }) {
  return (
    <h2 className="flex h-[37px] items-center justify-center gap-2 rounded bg-[#363150] pb-0.5 font-bold text-[#c8c5d3]">
      <Icon name={icon} />
      {title}
    </h2>
  );
}

function Sections({ items }: { items: string[] }) {
  return (
    <div className="bg-[#1d1839]">
      {items.map((t) => (
        <button key={t} className="flex h-[37px] w-full items-center pr-[3px] pb-[3px] font-bold text-[#c8c5d3]">
          <Icon name="closed" className="text-[#87839a]" />
          {t}
          {t === "Layout" && <span className="ml-auto font-normal text-[#635f78]">(1 change)</span>}
        </button>
      ))}
    </div>
  );
}

function SelectProp({ label, value }: { label: string; value: string }) {
  return (
    <label className="mt-1.5 grid h-[46px] grid-cols-2 items-center">
      <span className="pb-1 pl-3 text-[#918da3]">{label}</span>
      <span className="flex h-full items-center rounded bg-[#151029] pr-[3px] text-[#c8c5d3]">
        <select className="h-full flex-1 appearance-none bg-transparent pl-[9px] outline-none">
          <option>{value}</option>
        </select>
        <Icon name="chevron" />
      </span>
    </label>
  );
}

function CheckProp({ label }: { label: string }) {
  return (
    <label className="mt-1.5 grid h-[43px] grid-cols-2 items-center">
      <span className="pb-1 pl-3 text-[#918da3]">{label}</span>
      <span className="flex h-full items-center gap-[13px] rounded bg-[#151029] pb-0.5 pl-[7px] text-[#c8c5d3]">
        <input type="checkbox" className="size-[22px] appearance-none rounded bg-[#3c3850]" />
        On
      </span>
    </label>
  );
}

function Inspector() {
  return (
    <aside className="flex w-[1133px] shrink-0 flex-col overflow-hidden rounded-md bg-[#241c52]">
      <DockTabs tabs={["Inspector", "Node", "History"]} />
      <div className="flex h-[54px] shrink-0 items-center gap-1.5 px-1.5 pt-0.5">
        <Tool icon="fileNew" label="New resource" />
        <Tool icon="load" label="Load resource" />
        <Tool icon="save" label="Save resource" className="text-[#6f6b88]" />
        <Tool icon="dots" label="Resource options" />
        <div className="mr-0.5 ml-auto flex items-center gap-3 text-[#e0e0e0]">
          <button aria-label="Previous object"><Icon name="back" /></button>
          <button aria-label="Next object" className="text-[#6b6780]"><Icon name="forward" /></button>
        </div>
        <Tool icon="history" label="Object history" />
      </div>
      <div className="flex h-[46px] shrink-0 items-center px-1.5">
        <label className="flex h-full flex-1 items-center rounded bg-[#191439] px-1.5 text-[#c8c5d3]">
          <Icon name="textureRect" />
          <select aria-label="Edited object" className="h-full flex-1 appearance-none bg-transparent pl-3 outline-none">
            <option>TextureRect</option>
          </select>
          <Icon name="chevron" className="text-[#e0e0e0]" />
        </label>
        <button aria-label="Open documentation" className="mr-2 ml-[15px] text-[#e0e0e0]"><Icon name="doc" /></button>
      </div>
      <div className="mt-1.5 flex shrink-0 items-center px-1.5">
        <Field label="Filter properties" placeholder="Filter Properties" icon />
        <button aria-label="Property options" className="mr-2 ml-[15px] text-[#e0e0e0]"><Icon name="tools" /></button>
      </div>
      <div className="m-1.5 flex-1 rounded-md bg-[#161130] p-1.5">
        <Category icon="textureRect" title="TextureRect" />
        <div className="grid h-[46px] grid-cols-2">
          <div className="flex items-center justify-between bg-[#22454f] pr-3.5 pb-[3px] pl-3 text-[#9aa8b2]">
            Texture
            <button aria-label="Revert value" className="text-[#e0e0e0]"><Icon name="reload" /></button>
          </div>
          <div className="flex items-center">
            <button className="flex h-full flex-1 items-center pl-2 text-[#c8c5d3]">
              <Icon name="placeholderTex" className="text-[#e0e0e0]" />
              <span className="flex-1 text-center">PlaceholderTexture2D</span>
            </button>
            <button aria-label="Texture menu" className="flex h-full w-[39px] items-center justify-center rounded bg-[#191439] text-[#a9a6b8]"><Icon name="open" /></button>
          </div>
        </div>
        <SelectProp label="Expand Mode" value="Keep Size" />
        <SelectProp label="Stretch Mode" value="Scale" />
        <CheckProp label="Flip H" />
        <CheckProp label="Flip V" />
        <Category icon="control" title="Control" />
        <Sections items={["Layout", "Localization", "Tooltip", "Focus", "Mouse", "Input", "Theme"]} />
        <Category icon="brush" title="CanvasItem" />
        <Sections items={["Visibility", "Ordering", "Texture", "Material"]} />
        <Category icon="node" title="Node" />
        <Sections items={["Process", "Physics Interpolation", "Auto Translate", "Editor Description"]} />
        <div className="grid h-[46px] grid-cols-2 items-center">
          <span className="pb-1 pl-3 text-[#918da3]">Script</span>
          <div className="flex h-full items-center">
            <button className="h-full flex-1 text-center text-[#c8c5d3]">&lt;empty&gt;</button>
            <button aria-label="Script menu" className="flex h-full w-[39px] items-center justify-center rounded bg-[#191439] text-[#a9a6b8]"><Icon name="open" /></button>
          </div>
        </div>
        <button className="mx-auto mt-1.5 flex h-[46px] w-[268px] items-center rounded bg-[#252042] pl-[9px] text-[#c8c5d3]">
          <Icon name="add" className="text-[#e0e0e0]" />
          <span className="flex-1 text-center">Add Metadata</span>
        </button>
      </div>
    </aside>
  );
}

export default function App() {
  return (
    <div className="flex h-screen flex-col overflow-hidden bg-[#15102a] font-['Noto_Sans',sans-serif] text-[21px] leading-7">
      <TitleBar />
      <MenuBar />
      <main className="flex min-h-0 flex-1 gap-1.5 pr-1.5 pl-2">
        <LeftColumn />
        <div className="flex min-w-0 flex-1 flex-col">
          <SceneTabs />
          <CanvasToolbar />
          <Viewport />
          <BottomPanel />
        </div>
        <Inspector />
      </main>
    </div>
  );
}
